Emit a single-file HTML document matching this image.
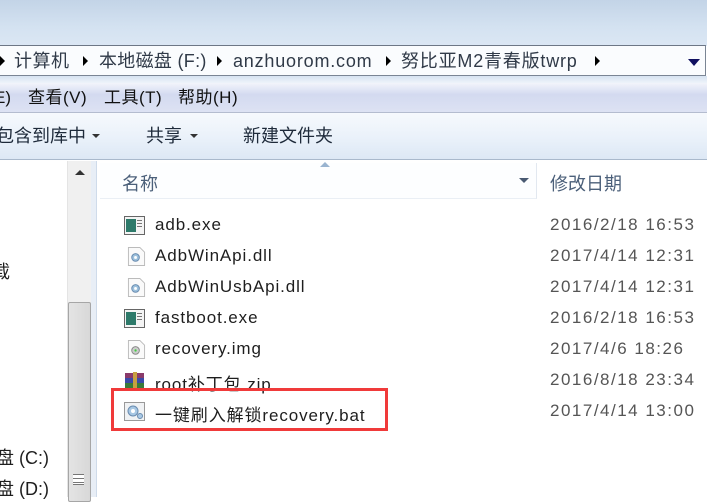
<!DOCTYPE html>
<html><head><meta charset="utf-8"><style>
*{margin:0;padding:0;box-sizing:border-box}
body{width:707px;height:497px;overflow:hidden;position:relative;background:#fff;font-family:"Liberation Sans","Noto Sans CJK SC",sans-serif;color:#1e1e1e}
.abs{position:absolute}
.t{position:absolute;white-space:nowrap}
.ico{position:absolute;width:21px;height:19px}
.ar{position:absolute;top:56px;width:0;height:0;border-top:5px solid transparent;border-bottom:5px solid transparent;border-left:5px solid #000}
.bc{position:absolute;top:49px;font-size:18px;color:#303a48;line-height:24px;white-space:nowrap}
.r{font-size:17px;letter-spacing:0.9px}
.d{font-size:17px;letter-spacing:1.5px;color:#555;left:550px}
</style></head><body>
<div class="abs" style="left:0;top:0;width:707px;height:46px;background:linear-gradient(#c3d4e7,#d4e2f1 60%,#dbe7f4)"></div>
<div class="abs" style="left:-2px;top:45px;width:708px;height:31px;background:#fafcfe;border:1px solid #7a8594;border-left:none;border-top-color:#6d7786"></div>
<div class="ar" style="left:0"></div>
<div class="bc" style="left:14px;letter-spacing:0.5px">计算机</div>
<div class="ar" style="left:83px"></div>
<div class="bc" style="left:99px;letter-spacing:0.3px">本地磁盘 (F:)</div>
<div class="ar" style="left:217px"></div>
<div class="bc" style="left:233px;letter-spacing:0.8px">anzhuorom.com</div>
<div class="ar" style="left:386px"></div>
<div class="bc" style="left:401px;letter-spacing:0.8px">努比亚M2青春版twrp</div>
<div class="ar" style="left:595px"></div>
<div class="abs" style="left:688px;top:59px;width:0;height:0;border-left:6px solid transparent;border-right:6px solid transparent;border-top:7px solid #101060"></div>
<div class="abs" style="left:0;top:76px;width:707px;height:7px;background:linear-gradient(#d6e3f1,#eef3fa)"></div>
<div class="abs" style="left:0;top:83px;width:707px;height:30px;background:linear-gradient(#f2f4fb,#d3daf0 40%,#dde2f3);border-bottom:1px solid #b4bccf"></div>
<div class="t" style="left:-6px;top:87px;font-size:17px;line-height:22px;color:#111">E)</div>
<div class="t" style="left:28px;top:87px;font-size:17px;line-height:22px;color:#111;letter-spacing:0.5px">查看(V)</div>
<div class="t" style="left:104px;top:87px;font-size:17px;line-height:22px;color:#111;letter-spacing:0.5px">工具(T)</div>
<div class="t" style="left:178px;top:87px;font-size:17px;line-height:22px;color:#111;letter-spacing:0.5px">帮助(H)</div>
<div class="abs" style="left:0;top:113px;width:707px;height:47px;background:linear-gradient(#f6f9fd,#ebf2fa 50%,#dde8f5);border-bottom:1px solid #a9b9cc"></div>
<div class="t" style="left:-4px;top:124px;font-size:18px;line-height:24px;color:#1e2a3a">包含到库中</div>
<div class="abs" style="left:92px;top:134px;border-left:4px solid transparent;border-right:4px solid transparent;border-top:4px solid #333"></div>
<div class="t" style="left:146px;top:124px;font-size:18px;line-height:24px;color:#1e2a3a">共享</div>
<div class="abs" style="left:190px;top:134px;border-left:4px solid transparent;border-right:4px solid transparent;border-top:4px solid #333"></div>
<div class="t" style="left:243px;top:124px;font-size:18px;line-height:24px;color:#1e2a3a">新建文件夹</div>
<div class="abs" style="left:67px;top:161px;width:24px;height:336px;background:#f0f0f0;border-left:1px solid #e4e4e4"></div>
<div class="abs" style="left:75px;top:170px;width:0;height:0;border-left:5px solid transparent;border-right:5px solid transparent;border-bottom:5px solid #333"></div>
<div class="abs" style="left:68px;top:302px;width:23px;height:200px;background:linear-gradient(90deg,#e4e4e4,#d8d8d8);border:1px solid #a6a6a6;border-radius:2px"></div>
<div class="abs" style="left:73px;top:474px;width:11px;height:11px;border-top:1px solid #777;border-bottom:1px solid #777;background:linear-gradient(#fff 0 3px,#777 3px 4px,#fff 4px 7px,#777 7px 8px,#fff 8px)"></div>
<div class="abs" style="left:91px;top:161px;width:6px;height:336px;background:#e8eef6;border-right:1px solid #cfdbea"></div>
<div class="t" style="left:-8px;top:258px;font-size:18px">载</div>
<div class="t" style="left:-4px;top:444px;font-size:18px">盘 (C:)</div>
<div class="t" style="left:-4px;top:475px;font-size:18px">盘 (D:)</div>
<div class="abs" style="left:98px;top:161px;width:609px;height:38px;background:#fff"></div>
<div class="abs" style="left:100px;top:163px;width:437px;height:36px;background:#fdfeff;border-right:1px solid #e2e8f0;border-bottom:1px solid #eaeff5"></div>
<div class="abs" style="left:320px;top:162px;width:0;height:0;border-left:5px solid transparent;border-right:5px solid transparent;border-bottom:5px solid #9ab4d0"></div>
<div class="t" style="left:122px;top:170px;font-size:18px;color:#4c607a">名称</div>
<div class="abs" style="left:519px;top:178px;width:0;height:0;border-left:5px solid transparent;border-right:5px solid transparent;border-top:5px solid #4a5a72"></div>
<div class="t" style="left:550px;top:170px;font-size:18px;color:#4c607a">修改日期</div>
<svg class="ico" style="left:124px;top:216px" viewBox="0 0 21 19"><rect x=".5" y=".5" width="20" height="18" fill="#f4f4f4" stroke="#666"/><rect x="2" y="3" width="10" height="13" fill="#2e7a6a"/><rect x="13" y="4" width="5" height="1" fill="#777"/><rect x="13" y="7" width="5" height="1" fill="#777"/><rect x="13" y="10" width="5" height="1" fill="#777"/></svg>
<div class="t r" style="left:155px;top:215px">adb.exe</div><div class="t d" style="top:215px">2016/2/18 16:53</div>
<svg class="ico" style="left:126px;top:247px" viewBox="0 0 18 20"><path d="M.5.5h12l5 5v14H.5z" fill="#fafafa" stroke="#bbb"/><circle cx="8" cy="11" r="4" fill="#9cc0dc" stroke="#6a8cb0"/><circle cx="8" cy="11" r="1.5" fill="#fff"/></svg>
<div class="t r" style="left:155px;top:246px">AdbWinApi.dll</div><div class="t d" style="top:246px">2017/4/14 12:31</div>
<svg class="ico" style="left:126px;top:278px" viewBox="0 0 18 20"><path d="M.5.5h12l5 5v14H.5z" fill="#fafafa" stroke="#bbb"/><circle cx="8" cy="11" r="4" fill="#9cc0dc" stroke="#6a8cb0"/><circle cx="8" cy="11" r="1.5" fill="#fff"/></svg>
<div class="t r" style="left:155px;top:277px">AdbWinUsbApi.dll</div><div class="t d" style="top:277px">2017/4/14 12:31</div>
<svg class="ico" style="left:124px;top:309px" viewBox="0 0 21 19"><rect x=".5" y=".5" width="20" height="18" fill="#f4f4f4" stroke="#666"/><rect x="2" y="3" width="10" height="13" fill="#2e7a6a"/><rect x="13" y="4" width="5" height="1" fill="#777"/><rect x="13" y="7" width="5" height="1" fill="#777"/><rect x="13" y="10" width="5" height="1" fill="#777"/></svg>
<div class="t r" style="left:155px;top:308px">fastboot.exe</div><div class="t d" style="top:308px">2016/2/18 16:53</div>
<svg class="ico" style="left:126px;top:340px" viewBox="0 0 18 20"><path d="M.5.5h12l5 5v14H.5z" fill="#fafafa" stroke="#bbb"/><circle cx="8" cy="11" r="4" fill="#ccc" stroke="#888"/><circle cx="8" cy="11" r="1.2" fill="#4c4"/></svg>
<div class="t r" style="left:155px;top:339px">recovery.img</div><div class="t d" style="top:339px">2017/4/6 18:26</div>
<svg class="ico" style="left:124px;top:371px" viewBox="0 0 21 19"><rect x="1" y="2" width="19" height="5" fill="#8a3a6a"/><rect x="1" y="7" width="19" height="5" fill="#3a4aa8"/><rect x="1" y="12" width="19" height="5" fill="#3a7a3a"/><rect x="9" y="1" width="4" height="17" fill="#c8a040"/></svg>
<div class="t r" style="left:155px;top:370px">root补丁包.zip</div><div class="t d" style="top:370px">2016/8/18 23:34</div>
<svg class="ico" style="left:124px;top:402px" viewBox="0 0 21 19"><rect x=".5" y=".5" width="20" height="18" fill="#f0f2f4" stroke="#999"/><circle cx="9" cy="9" r="5" fill="#a8c8e4" stroke="#6a8cb0"/><circle cx="9" cy="9" r="2" fill="#fff"/><circle cx="16" cy="14" r="2.5" fill="#a8c8e4" stroke="#6a8cb0"/></svg>
<div class="t r" style="left:155px;top:401px">一键刷入解锁recovery.bat</div><div class="t d" style="top:401px">2017/4/14 13:00</div>
<div class="abs" style="left:111px;top:388px;width:277px;height:43px;border:3px solid #f03a3a"></div>
</body></html>
